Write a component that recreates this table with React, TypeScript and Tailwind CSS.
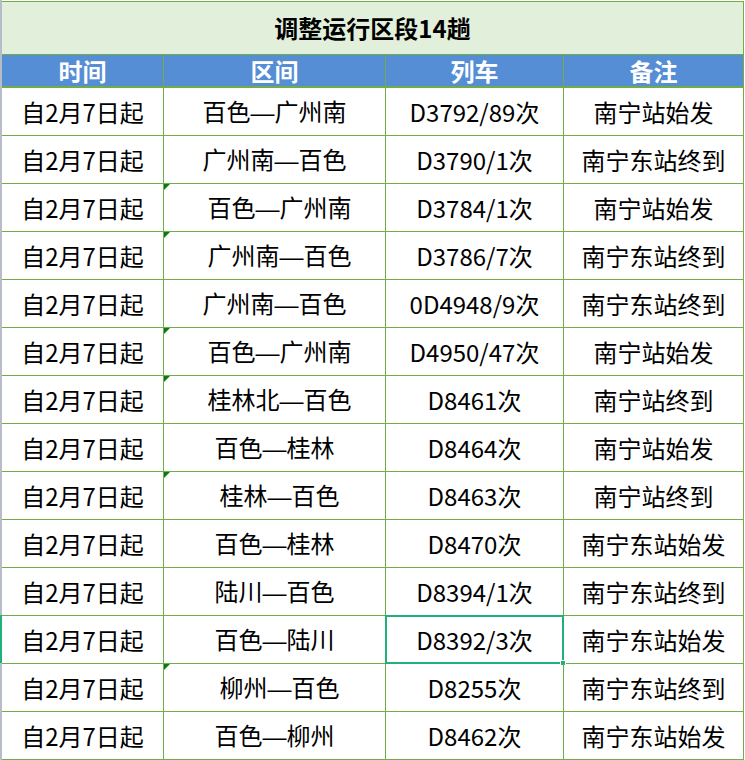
import React from 'react'

type Row = {
  time: string
  section: string
  train: string
  note: string
  mark?: boolean
  selected?: boolean
}

const rows: Row[] = [
  { time: '自2月7日起', section: '百色—广州南', train: 'D3792/89次', note: '南宁站始发' },
  { time: '自2月7日起', section: '广州南—百色', train: 'D3790/1次', note: '南宁东站终到' },
  { time: '自2月7日起', section: '百色—广州南', train: 'D3784/1次', note: '南宁站始发', mark: true },
  { time: '自2月7日起', section: '广州南—百色', train: 'D3786/7次', note: '南宁东站终到', mark: true },
  { time: '自2月7日起', section: '广州南—百色', train: '0D4948/9次', note: '南宁东站终到' },
  { time: '自2月7日起', section: '百色—广州南', train: 'D4950/47次', note: '南宁站始发', mark: true },
  { time: '自2月7日起', section: '桂林北—百色', train: 'D8461次', note: '南宁站终到', mark: true },
  { time: '自2月7日起', section: '百色—桂林', train: 'D8464次', note: '南宁站始发' },
  { time: '自2月7日起', section: '桂林—百色', train: 'D8463次', note: '南宁站终到', mark: true },
  { time: '自2月7日起', section: '百色—桂林', train: 'D8470次', note: '南宁东站始发' },
  { time: '自2月7日起', section: '陆川—百色', train: 'D8394/1次', note: '南宁东站终到' },
  { time: '自2月7日起', section: '百色—陆川', train: 'D8392/3次', note: '南宁东站始发', selected: true },
  { time: '自2月7日起', section: '柳州—百色', train: 'D8255次', note: '南宁东站终到', mark: true },
  { time: '自2月7日起', section: '百色—柳州', train: 'D8462次', note: '南宁东站始发' },
]

const cols = 'grid grid-cols-[162px_222px_178px_180px]'

function Triangle() {
  return (
    <svg className="absolute top-0 left-0" width="6" height="6" viewBox="0 0 6 6">
      <polygon points="0,0 6,0 0,6" fill="#0b7a12" />
    </svg>
  )
}

// the em dash is a full em wide in the sheet font
function Section({ text }: { text: string }) {
  const [a, b] = text.split('—')
  return (
    <span>
      {a}
      <span className="font-['Liberation_Sans',sans-serif]">—</span>
      {b}
    </span>
  )
}

export default function App() {
  return (
    <div className="w-[745px] h-[760px] bg-white flex font-['Noto_Sans_CJK_SC',sans-serif] text-black overflow-hidden">
      {/* row header edge */}
      <div className="w-[2px] flex flex-col">
        <div className="h-[615px] bg-[#b6bcc8]" />
        <div className="h-[48px] bg-[#21b07a]" />
        <div className="flex-1 bg-[#b6bcc8]" />
      </div>

      <div className="w-[742px] pt-[1px]">
        {/* title */}
        <div className="h-[54px] bg-[#e2efda] border-t border-b border-r border-[#70ad47] flex items-center justify-center">
          <span className="text-[24px] font-bold leading-none">调整运行区段14趟</span>
        </div>

        {/* header */}
        <div className={`${cols} h-[33px] bg-[#558ed5] border-b-2 border-[#70ad47] text-white font-bold text-[24px]`}>
          {['时间', '区间', '列车', '备注'].map((h) => (
            <div key={h} className="border-r border-[#70ad47] flex items-center justify-center leading-none">
              {h}
            </div>
          ))}
        </div>

        {rows.map((r, i) => (
          <div key={i} className={`${cols} h-[48px] text-[24px]`}>
            <div className="border-r border-b border-[#70ad47] flex items-center justify-center leading-none">
              {r.time}
            </div>
            <div className="relative border-r border-b border-[#70ad47] flex items-center justify-center leading-none">
              {r.mark && <Triangle />}
              <span className={r.mark ? 'pl-[10px]' : ''}>
                <Section text={r.section} />
              </span>
            </div>
            <div className="relative border-r border-b border-[#70ad47] flex items-center justify-center leading-none">
              {r.train}
              {r.selected && (
                <div className="absolute -top-[1px] -left-[1px] w-[179px] h-[49px] border-2 border-[#21b07a]">
                  <div className="absolute -right-[4px] -bottom-[4px] w-[6px] h-[6px] bg-[#21b07a] border border-white" />
                </div>
              )}
            </div>
            <div className="border-r border-b border-[#70ad47] flex items-center justify-center leading-none">
              {r.note}
            </div>
          </div>
        ))}
      </div>
    </div>
  )
}
